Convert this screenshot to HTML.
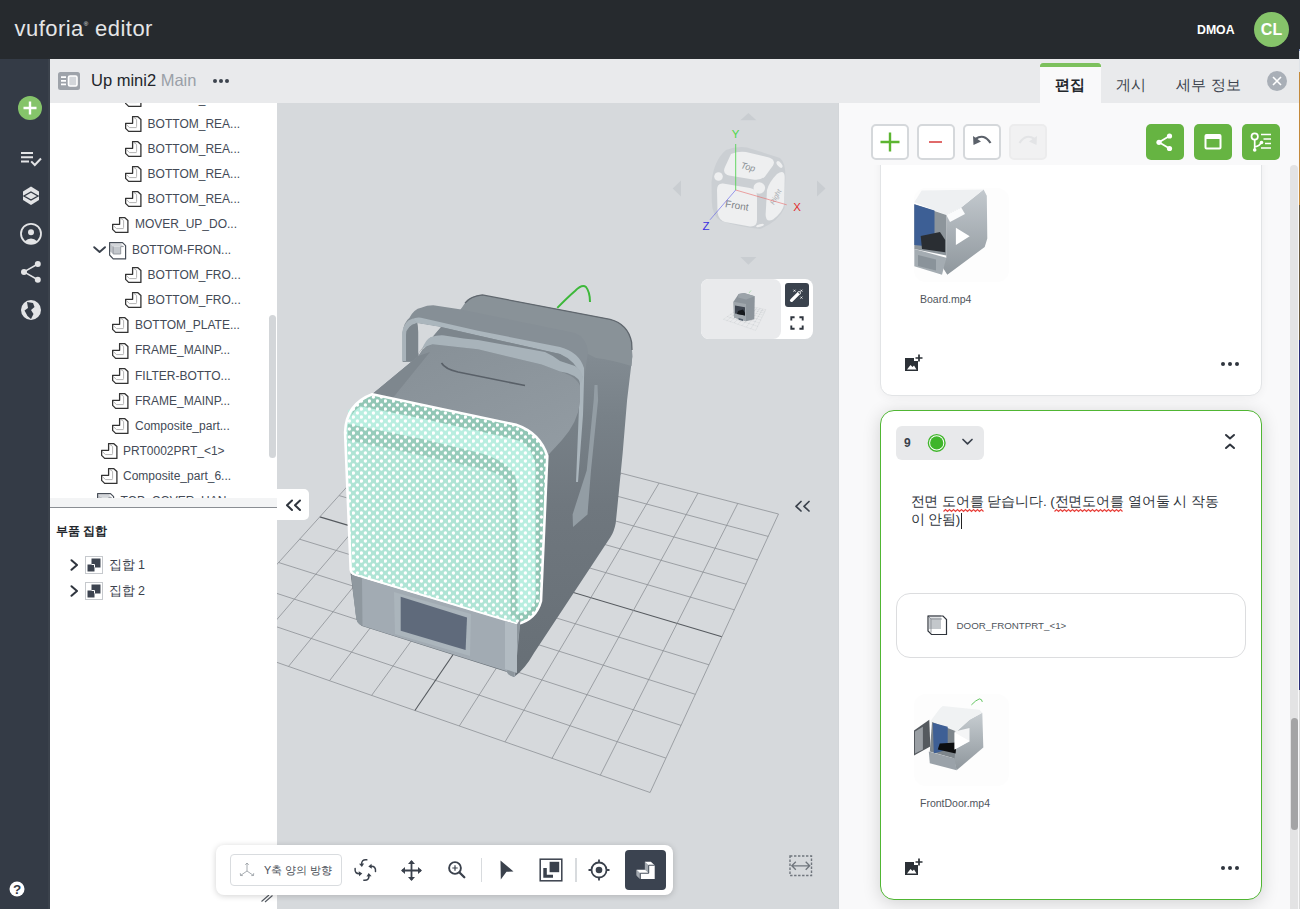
<!DOCTYPE html>
<html><head><meta charset="utf-8">
<style>
*{box-sizing:border-box;margin:0;padding:0}
html,body{width:1300px;height:909px;overflow:hidden;background:#d7dadd;font-family:"Liberation Sans",sans-serif}
.abs{position:absolute}
#topbar{left:0;top:0;width:1299px;height:59px;background:#262a2e}
#edge{left:1299px;top:0;width:1px;height:909px;background:linear-gradient(#262a2e 0 49px,#8090c0 49px 51px,#dfe3e8 51px 72px,#c48a3c 72px 205px,#6a5a40 205px 340px,#2c2f7a 340px 690px,#d9d9d9 690px)}
#side{left:0;top:59px;width:50px;height:850px;background:#343b46}
#hdr{left:50px;top:59px;width:1249px;height:44px;background:#e9eaec}
#tree{left:50px;top:103px;width:227px;height:806px;background:#fff;overflow:hidden}
#view{left:277px;top:103px;width:561px;height:806px;background:#d6d9dc;overflow:hidden}
#rp{left:838px;top:103px;width:461px;height:806px;background:#f9f9fa;overflow:hidden}
.row{position:absolute;height:20px;font-size:12px;color:#434a56;white-space:nowrap;line-height:20px}
.row svg{position:absolute;top:2px}
.row span{position:absolute;top:0}
</style></head><body>
<svg width="0" height="0" style="position:absolute">
<defs>
<symbol id="part" viewBox="0 0 17 17">
<path d="M8.9 1.5 L11.6 3.4 L11.6 10.8 M1.3 8.4 L4.4 11.6 L11.6 11.6" fill="none" stroke="#b5b5b5" stroke-width="1"/>
<path d="M7.6 0.6 L12.6 0.6 L15.9 3.6 L15.9 15.4 L3.65 15.4 L0.6 12.4 L0.6 7.35 L7.6 7.35 Z" fill="none" stroke="#333" stroke-width="1.3" stroke-linejoin="round"/>
</symbol>
<symbol id="asm" viewBox="0 0 18 19">
<path d="M1.2 2.5 L11.7 2.5 L14.7 5.6 L4.2 5.6 Z" fill="#d2d5d9"/>
<path d="M1.2 2.5 L4.2 5.6 L4.2 13 L1.2 10.5 Z" fill="#bfc3c8"/>
<rect x="4.2" y="5.6" width="7.5" height="7.4" fill="#c3c7cc"/>
<path d="M4.2 5.6 L4.2 13 L11.7 13 L11.7 5.6 M11.7 5.6 L14.7 5.6" fill="none" stroke="#8e949b" stroke-width="0.9"/>
<path d="M0.6 1.6 L13.5 1.6 L16.6 4.65 L16.6 17.9 L4.2 17.9 L0.6 14 Z" fill="none" stroke="#474e58" stroke-width="1.2" stroke-linejoin="round"/>
</symbol>
</defs></svg>

<div id="topbar" class="abs">
 <div class="abs" style="left:14.5px;top:9.6px;font-size:22px;color:#e4e5e6;letter-spacing:0.45px;line-height:28px">vuforia<span style="font-size:6px;vertical-align:10px">&reg;</span> editor</div>
 <div class="abs" style="left:1197px;top:23px;font-size:12.3px;font-weight:bold;color:#fff;line-height:14px">DMOA</div>
 <div class="abs" style="left:1254px;top:12px;width:35px;height:35px;border-radius:50%;background:#86c46a;color:#fff;font-weight:bold;font-size:16px;line-height:35px;text-align:center">CL</div>
</div>
<div id="edge" class="abs"></div>

<div id="side" class="abs">
 <div class="abs" style="left:47.5px;top:0;width:2.5px;height:850px;background:#3b424c"></div>
 <svg class="abs" style="left:0;top:0" width="50" height="850">
  <g transform="translate(0,-59)">
   <circle cx="30" cy="108" r="12" fill="#85c46a"/>
   <path d="M30 101.5 V114.5 M23.5 108 H36.5" stroke="#fff" stroke-width="2.4"/>
   <path d="M21 153 H33 M21 157.2 H33 M21 161.4 H29" stroke="#e3e4e6" stroke-width="2"/>
   <path d="M31.2 161.4 L34.8 165 L41 158.5" fill="none" stroke="#e3e4e6" stroke-width="2"/>
   <path d="M31 186.5 L39 191.5 L39 200 L31 205 L23 200 L23 191.5 Z" fill="#e3e4e6"/>
   <path d="M31 192 L38 196 L31 200 L24 196 Z" fill="#e3e4e6" stroke="#343b46" stroke-width="1.4"/>
   <circle cx="31" cy="233.8" r="10" fill="none" stroke="#e3e4e6" stroke-width="1.8"/>
   <circle cx="31" cy="232.3" r="3" fill="#e3e4e6"/>
   <path d="M24.5 241.5 Q31 235.5 37.5 241.5 Q31 246 24.5 241.5 Z" fill="#e3e4e6"/>
   <path d="M24 271.9 L37.8 264 M24 271.9 L37.8 279.8" stroke="#e3e4e6" stroke-width="1.6"/>
   <circle cx="24" cy="271.9" r="3" fill="#e3e4e6"/><circle cx="37.8" cy="264" r="3" fill="#e3e4e6"/><circle cx="37.8" cy="279.8" r="3" fill="#e3e4e6"/>
   <circle cx="31" cy="310" r="10" fill="#e3e4e6"/>
   <path d="M27 302 L33 303 L34.5 307 L31 310 L33.5 314 L31 319 L27.5 316 L24.5 310.5 L28 308 Z" fill="#343b46"/>
   <circle cx="17" cy="889" r="7.5" fill="#fff"/>
   <text x="17" y="894.2" font-size="13.5" font-weight="bold" fill="#343b46" text-anchor="middle" font-family="Liberation Sans">?</text>
  </g>
 </svg>
</div>

<div id="hdr" class="abs">
 <svg class="abs" style="left:8px;top:13px" width="22" height="18">
  <rect x="0" y="0" width="22" height="18" rx="2.5" fill="#9ea3aa"/>
  <path d="M3 5.2 H8 M3 8.8 H8 M3 12.4 H8" stroke="#fff" stroke-width="1.7"/>
  <rect x="10.5" y="4" width="8.5" height="10" rx="1.5" fill="#d3d6da" stroke="#fff" stroke-width="1.6"/>
 </svg>
 <div class="abs" style="left:41px;top:11px;font-size:16.5px;line-height:20px;color:#22262b;white-space:nowrap">Up mini2 <span style="color:#9aa0a8">Main</span></div>
 <svg class="abs" style="left:162px;top:18px" width="18" height="8"><circle cx="3" cy="4" r="2" fill="#3d444e"/><circle cx="9" cy="4" r="2" fill="#3d444e"/><circle cx="15" cy="4" r="2" fill="#3d444e"/></svg>
 <!-- tabs -->
 <div class="abs" style="left:990px;top:4px;width:61px;height:40px;background:#f9f9fa"></div>
 <div class="abs" style="left:990px;top:4px;width:61px;height:4px;background:#7cc05d;border-radius:3px 3px 0 0"></div>
 <div class="abs" style="left:1005px;top:17px;font-size:14.5px;font-weight:bold;color:#22262b;line-height:18px">편집</div>
 <div class="abs" style="left:1066px;top:17px;font-size:14.5px;color:#3d444e;line-height:18px">게시</div>
 <div class="abs" style="left:1126px;top:17px;font-size:14.5px;color:#3d444e;line-height:18px;letter-spacing:0.3px">세부 정보</div>
 <svg class="abs" style="left:1216px;top:12px" width="22" height="22"><circle cx="11" cy="10" r="10" fill="#a9afb7"/><path d="M7 6 L15 14 M15 6 L7 14" stroke="#fff" stroke-width="1.6"/></svg>
</div>
<div id="tree" class="abs">
<div class="abs" style="left:0;top:0;width:227px;height:395px;overflow:hidden">
<div class="row" style="left:0;top:-14.5px;width:227px"><svg style="left:74.7px;top:2.3px" width="17" height="17"><use href="#part"/></svg><span style="left:97.6px">BOTTOM_REA...</span></div>
<div class="row" style="left:0;top:10.7px;width:227px"><svg style="left:74.7px;top:2.3px" width="17" height="17"><use href="#part"/></svg><span style="left:97.6px">BOTTOM_REA...</span></div>
<div class="row" style="left:0;top:35.9px;width:227px"><svg style="left:74.7px;top:2.3px" width="17" height="17"><use href="#part"/></svg><span style="left:97.6px">BOTTOM_REA...</span></div>
<div class="row" style="left:0;top:61.1px;width:227px"><svg style="left:74.7px;top:2.3px" width="17" height="17"><use href="#part"/></svg><span style="left:97.6px">BOTTOM_REA...</span></div>
<div class="row" style="left:0;top:86.2px;width:227px"><svg style="left:74.7px;top:2.3px" width="17" height="17"><use href="#part"/></svg><span style="left:97.6px">BOTTOM_REA...</span></div>
<div class="row" style="left:0;top:111.4px;width:227px"><svg style="left:62.2px;top:2.3px" width="17" height="17"><use href="#part"/></svg><span style="left:85px">MOVER_UP_DO...</span></div>
<div class="row" style="left:0;top:136.6px;width:227px"><svg style="left:42.5px;top:6.2px" width="13" height="8"><path d="M1.2 1.2 L6.6 6 L12 1.2" fill="none" stroke="#3a414c" stroke-width="1.9" stroke-linecap="round" stroke-linejoin="round"/></svg><svg style="left:59px;top:1px" width="18" height="19"><use href="#asm"/></svg><span style="left:82px">BOTTOM-FRON...</span></div>
<div class="row" style="left:0;top:161.8px;width:227px"><svg style="left:74.7px;top:2.3px" width="17" height="17"><use href="#part"/></svg><span style="left:97.6px">BOTTOM_FRO...</span></div>
<div class="row" style="left:0;top:187.0px;width:227px"><svg style="left:74.7px;top:2.3px" width="17" height="17"><use href="#part"/></svg><span style="left:97.6px">BOTTOM_FRO...</span></div>
<div class="row" style="left:0;top:212.1px;width:227px"><svg style="left:62.2px;top:2.3px" width="17" height="17"><use href="#part"/></svg><span style="left:85px">BOTTOM_PLATE...</span></div>
<div class="row" style="left:0;top:237.3px;width:227px"><svg style="left:62.2px;top:2.3px" width="17" height="17"><use href="#part"/></svg><span style="left:85px">FRAME_MAINP...</span></div>
<div class="row" style="left:0;top:262.5px;width:227px"><svg style="left:62.2px;top:2.3px" width="17" height="17"><use href="#part"/></svg><span style="left:85px">FILTER-BOTTO...</span></div>
<div class="row" style="left:0;top:287.7px;width:227px"><svg style="left:62.2px;top:2.3px" width="17" height="17"><use href="#part"/></svg><span style="left:85px">FRAME_MAINP...</span></div>
<div class="row" style="left:0;top:312.9px;width:227px"><svg style="left:62.2px;top:2.3px" width="17" height="17"><use href="#part"/></svg><span style="left:85px">Composite_part...</span></div>
<div class="row" style="left:0;top:338.0px;width:227px"><svg style="left:50.7px;top:2.3px" width="17" height="17"><use href="#part"/></svg><span style="left:73px">PRT0002PRT_&lt;1&gt;</span></div>
<div class="row" style="left:0;top:363.2px;width:227px"><svg style="left:50.7px;top:2.3px" width="17" height="17"><use href="#part"/></svg><span style="left:73px">Composite_part_6...</span></div>
<div class="row" style="left:0;top:388.4px;width:227px"><svg style="left:31px;top:6.2px" width="13" height="8"><path d="M1.2 1.2 L6.6 6 L12 1.2" fill="none" stroke="#3a414c" stroke-width="1.9" stroke-linecap="round" stroke-linejoin="round"/></svg><svg style="left:46.7px;top:1px" width="18" height="19"><use href="#asm"/></svg><span style="left:70.6px">TOP_COVER_HAN...</span></div>
</div>
<div class="abs" style="left:0;top:395px;width:227px;height:9px;background:#f3f4f5"></div>
<div class="abs" style="left:0;top:404px;width:227px;height:1px;background:#8a8e93"></div>
<div class="abs" style="left:218.75px;top:212px;width:7px;height:143px;border-radius:3.5px;background:#d3d6d9"></div>
<div class="abs" style="left:6px;top:420px;font-size:11.8px;font-weight:bold;color:#22262b;line-height:16px">부품 집합</div>
<svg class="abs" style="left:20px;top:455.8px" width="10" height="12"><path d="M1.5 1.2 L7 6 L1.5 10.8" fill="none" stroke="#2f353e" stroke-width="2" stroke-linecap="round" stroke-linejoin="round"/></svg>
<svg class="abs" style="left:34.9px;top:452.8px" width="18" height="18"><rect x="0.5" y="0.5" width="17" height="17" fill="#fff" stroke="#c6c9cd"/><rect x="6.5" y="2.5" width="9" height="9" fill="#3d4450"/><rect x="2.5" y="8.5" width="7" height="7" fill="#3d4450"/><path d="M6.5 8.5 H9.5 V11.5" stroke="#fff" stroke-width="1" fill="none"/></svg>
<div class="abs" style="left:58.6px;top:453.8px;font-size:12.5px;color:#3a414c;line-height:16px">집합 1</div>
<svg class="abs" style="left:20px;top:481.8px" width="10" height="12"><path d="M1.5 1.2 L7 6 L1.5 10.8" fill="none" stroke="#2f353e" stroke-width="2" stroke-linecap="round" stroke-linejoin="round"/></svg>
<svg class="abs" style="left:34.9px;top:478.8px" width="18" height="18"><rect x="0.5" y="0.5" width="17" height="17" fill="#fff" stroke="#c6c9cd"/><rect x="6.5" y="2.5" width="9" height="9" fill="#3d4450"/><rect x="2.5" y="8.5" width="7" height="7" fill="#3d4450"/><path d="M6.5 8.5 H9.5 V11.5" stroke="#fff" stroke-width="1" fill="none"/></svg>
<div class="abs" style="left:58.6px;top:479.8px;font-size:12.5px;color:#3a414c;line-height:16px">집합 2</div>
</div>
<div id="view" class="abs">
<svg class="abs" style="left:0;top:0" width="561" height="806" viewBox="277 103 561 806">
<defs>
<pattern id="dots" x="0" y="-1" width="8" height="8" patternUnits="userSpaceOnUse">
<circle cx="1.4" cy="2" r="1.7" fill="#fff"/><circle cx="5.4" cy="6" r="1.7" fill="#fff"/>
</pattern>
<linearGradient id="rface" x1="0" y1="0" x2="0" y2="1">
<stop offset="0" stop-color="#879097"/><stop offset="0.16" stop-color="#828b92"/><stop offset="0.32" stop-color="#788188"/><stop offset="0.55" stop-color="#6f777e"/><stop offset="1" stop-color="#676f76"/>
</linearGradient>
<linearGradient id="tface" x1="0" y1="0" x2="1" y2="1">
<stop offset="0" stop-color="#858e95"/><stop offset="1" stop-color="#939ca3"/>
</linearGradient>
</defs>
<g id="grid">
<line x1="778.5" y1="514.0" x2="408.9" y2="418.2" stroke="#8d9196" stroke-width="0.8"/>
<line x1="768.2" y1="536.4" x2="392.5" y2="436.4" stroke="#8d9196" stroke-width="0.8"/>
<line x1="757.4" y1="559.8" x2="375.4" y2="455.4" stroke="#8d9196" stroke-width="0.8"/>
<line x1="746.1" y1="584.2" x2="357.6" y2="475.1" stroke="#8d9196" stroke-width="0.8"/>
<line x1="734.3" y1="609.8" x2="339.1" y2="495.6" stroke="#8d9196" stroke-width="0.8"/>
<line x1="721.9" y1="636.7" x2="319.8" y2="516.9" stroke="#55595e" stroke-width="1.1"/>
<line x1="709.0" y1="664.8" x2="299.6" y2="539.2" stroke="#8d9196" stroke-width="0.8"/>
<line x1="695.3" y1="694.3" x2="278.6" y2="562.5" stroke="#8d9196" stroke-width="0.8"/>
<line x1="681.0" y1="725.4" x2="256.6" y2="586.8" stroke="#8d9196" stroke-width="0.8"/>
<line x1="665.9" y1="758.1" x2="233.6" y2="612.3" stroke="#8d9196" stroke-width="0.8"/>
<line x1="650.1" y1="792.5" x2="209.6" y2="638.9" stroke="#8d9196" stroke-width="0.8"/>
<line x1="778.5" y1="514.0" x2="650.1" y2="792.5" stroke="#8d9196" stroke-width="0.8"/>
<line x1="737.8" y1="503.4" x2="600.3" y2="775.2" stroke="#8d9196" stroke-width="0.8"/>
<line x1="698.0" y1="493.1" x2="552.0" y2="758.3" stroke="#8d9196" stroke-width="0.8"/>
<line x1="659.1" y1="483.0" x2="505.0" y2="741.9" stroke="#8d9196" stroke-width="0.8"/>
<line x1="621.0" y1="473.2" x2="459.3" y2="726.0" stroke="#8d9196" stroke-width="0.8"/>
<line x1="583.7" y1="463.5" x2="414.9" y2="710.5" stroke="#55595e" stroke-width="1.1"/>
<line x1="547.3" y1="454.1" x2="371.6" y2="695.4" stroke="#8d9196" stroke-width="0.8"/>
<line x1="511.6" y1="444.8" x2="329.5" y2="680.7" stroke="#8d9196" stroke-width="0.8"/>
<line x1="476.7" y1="435.8" x2="288.5" y2="666.4" stroke="#8d9196" stroke-width="0.8"/>
<line x1="442.4" y1="426.9" x2="248.5" y2="652.5" stroke="#8d9196" stroke-width="0.8"/>
<line x1="408.9" y1="418.2" x2="209.6" y2="638.9" stroke="#8d9196" stroke-width="0.8"/>
</g>
<g id="model">
 <path d="M463.9,306.8 Q470,296 482.4,294.9 L610.1,319.3 Q628,324 631.6,342.2 L632.3,356.5 L627.1,400 L622.7,452.8 L617.5,505.6 L615.7,523.2 Q614,532 610.4,537.3 L534,653 Q525,669 514,677 L507,672 L362,626 Q356,623 356,616 L350.7,574.5 L346.4,431.5 Q347,408 372.2,394.3 L418.4,356 L441,327 L461,309 Z" fill="url(#rface)"/>
 <path d="M461,309 L467,300 Q472,295.5 482.4,294.9 L610.1,319.3 Q628,324 631.6,342.2 L632.3,356.5 L631.5,366 Q612,360 596,358 L584,352 L470,322 Z" fill="#899298"/>
 <path d="M465,303 Q471,296 482.4,294.9 L610.1,319.3 Q628,324 631.6,342.2 L632,350" fill="none" stroke="#60676e" stroke-width="1.3"/>
 <!-- strap top -->
 <path d="M402.6,362 L402.6,332.3 Q404,322 409.5,317.7 Q414,309 421.1,307.7 Q428,305 435,305.4 L459.6,309.2 L575,333 Q587,338 588,352 L584.4,377 L580,377 Q578,362 566,356 L478,335.4 L441,327 L417.2,323.1 L418.4,332 L418.4,362 Z" fill="#868f96"/>
 <!-- strap light edge -->
 <path d="M411.9,319.2 Q416,317 421,317.7 L478,330.8 L560,347 Q579,352 584,368 L584,380 L583,415 L578,482 L576,482 L578.7,415 L580,384 Q578,366 566,358 L560,354 L478,335.4 L441,327 L417.2,323.1 Z" fill="#abb6bd"/>
 <path d="M402.2,361 L402.2,333 Q403.5,321 413,318.5 L417.2,323.1 Q406.1,326 406.1,335 L406.1,361 Z" fill="#a9b3ba"/>
 <path d="M406.1,361 L406.1,335 Q406.1,326 417.2,323.1 L418.4,332 L418.4,361 Z" fill="#7c858c"/>
 <!-- loop bg -->
 <path d="M418.4,323.4 L441,327.3 L418.4,353.8 Z" fill="#d6d9dc"/>
 <!-- body back strip -->
 <path d="M441,327 L478,335.4 L560,354 Q575,360 583,378 L575,370 L560,362 L478,340 L463.4,338.5 L444.2,335.4 Q433,336 431.1,337 L422.6,347.7 L416.5,355.4 Z" fill="#7d868d"/>
 <!-- body top face -->
 <path d="M345.1,432.4 Q347,408 372.2,394.3 L418.4,356 L422.6,349.3 L432.6,344.3 L478,349.3 L541.6,364.6 L560,371.6 Q577,377 580,386 L580,402 Q578,422 562,440 L547.3,456 Q540,436 516,424.8 Z" fill="url(#tface)"/>
 <path d="M372.2,394.3 L418.4,356 L430,352 L392,399 Z" fill="#7c858c" opacity="0.85"/>
 <!-- lip -->
 <path d="M422.6,348.5 Q425,340 431.1,337 Q437,335 444.2,335.4 L463.4,338.5 L478,340 L545,352 Q552,355 560,361 L575,366 Q582,370 583,378 L581,383 Q576,374 560,371.6 L541.6,364.6 L478,349.3 L432.6,344.3 Q426,346 422.6,349.3 Z" fill="#a8b3ba"/>
 <path d="M441.5,363 Q445,369 458,372 L525,385.5" fill="none" stroke="#596068" stroke-width="1.6"/>
 <!-- right leg wide strip -->
 <path d="M594.5,385 L597.5,385 L598.1,400 L591,470.4 L587.5,514.4 L573,527 L572.6,514.4 L586.7,470.4 L593.7,400 Z" fill="#939da4"/>
 <!-- door base -->
 <path d="M372.2,394.3 L516,424.8 Q540,433 547.3,456 L541,601 Q536,620 517,624 L362,577 Q351,575 350.7,570 L345.1,432.4 Q347,408 372.2,394.3 Z" fill="#afe4d5"/>
 <path d="M348,410 L360.4,406.2 L421.9,418.5 L498.8,435.4 L522,441.5 Q532,448 535.6,465 L535.8,598 Q534,612 517.4,616 L517.3,490 Q517,480 514,474 Q507,462 483.5,454 L421.9,439 L348,424 Z" fill="#b9eee0"/>
 <path d="M350,418 Q356,401 372.2,394.3 L516,424.8 Q540,433 547.3,456 L541,601 Q536,620 517,624 L516,614 Q534,612 535.8,598 L535.6,465 Q532,448 522,441.5 L498.8,435.4 L421.9,418.5 L360.4,406.2 Q354,410 350,418 Z" fill="#91c6b5"/>
 <path d="M348,424 L421.9,439 L483.5,454 Q507,462 514,474 Q517,480 517.3,490 L517.5,618 L510.4,616 L510.4,492 Q509,485 503.5,478.5 Q497,472 483.5,469.2 L421.9,455.4 L348,440 Z" fill="#97ccbb"/>
 <path d="M372.2,394.3 L516,424.8 Q540,433 547.3,456 L541,601 Q536,620 517,624 L362,577 Q351,575 350.7,570 L345.1,432.4 Q346,404 372.2,394.3 Z" fill="url(#dots)" stroke="#fff" stroke-width="2.6"/>
 <!-- bottom strip -->
 <path d="M351.5,575 L362,578 L517,624.5 L520.5,619 L515,677 Q510,676 506,671 L363,626 Q356,623 356,616 Z" fill="#a2abb3"/>
 <path d="M351.5,575 L362,578 L362.5,626 Q356,623 356,616 Z" fill="#8f989f"/>
 <path d="M517,624.5 L520.5,619 L514,677 Q508,676 507,672 Z" fill="#8d969d"/>
 <path d="M505,621 L517,624.5 L517,673 L505,669 Z" fill="#b2bbc2"/>
 <path d="M394,592 L471,614 L470,656 L395,634 Z" fill="#abb5bc"/>
 <path d="M400.7,596.8 L467,617.5 L465.6,649.9 L400.7,630.7 Z" fill="#5f6a7b"/>
 <path d="M557.3,307.9 Q568,297 575,291 Q582,284 586,287 Q590,292 590,302" fill="none" stroke="#3db83a" stroke-width="2"/>
</g>
<!-- view cube -->
<g id="cube">
 <path d="M740.4,120.3 L748.4,113 L756.4,120.3 Z" fill="#c9cdd1"/>
 <path d="M740.4,257 L748.4,264.7 L756.4,257 Z" fill="#c9cdd1"/>
 <path d="M681,180.5 L672.7,188.5 L681,196.5 Z" fill="#c9cdd1"/>
 <path d="M817,180.5 L825.5,188.5 L817,196.5 Z" fill="#c9cdd1"/>
 <path d="M726,150 Q736,146 747,147.4 L780,158 Q786,163 785.3,179 L784.5,208 Q778,222 760,229 Q740,227 721,221 Q712,216 711.8,202 L711.5,182 Q714,160 726,150 Z" fill="#cbcfd3"/>
 <path d="M731,154 Q738,151 746,152 L769,157.5 Q776,160 773,165.5 L765,176.5 Q761,180.5 753,179.5 L729,175.5 Q722,173.5 725,167 Z" fill="#eeeff0"/>
 <path d="M723,183.5 Q717,183 717,190 L717.5,212 Q718.5,220 725,222 L750,226.5 Q757,227 757,220 L757,196 Q757,189 750,188 Z" fill="#eeeff0"/>
 <path d="M767,190 Q769,182 777,174 Q784.5,169 784.7,177 L784.2,204 Q783,212 773,219.5 Q766,223 765.6,215 Z" fill="#eeeff0"/>
 <circle cx="718.5" cy="176.5" r="4.3" fill="#eeeff0"/>
 <circle cx="759.3" cy="188" r="5.8" fill="#eeeff0"/>
 <ellipse cx="779.5" cy="164.5" rx="2" ry="4" transform="rotate(-40 779.5 164.5)" fill="#eeeff0"/>
 <ellipse cx="760" cy="225.5" rx="4" ry="1.3" transform="rotate(-15 760 225.5)" fill="#eeeff0"/>
 <text x="748" y="170" font-size="9" font-style="italic" fill="#8c9196" text-anchor="middle" transform="rotate(15 748 167)" font-family="Liberation Sans">Top</text>
 <text x="737" y="209" font-size="10" fill="#7e8388" text-anchor="middle" transform="rotate(9 737 205)" font-family="Liberation Sans">Front</text>
 <text x="776" y="199" font-size="7" font-style="italic" fill="#a9adb1" text-anchor="middle" transform="rotate(-62 776 197)" font-family="Liberation Sans">Right</text>
 <line x1="735.7" y1="190" x2="735.7" y2="144" stroke="#55d455" stroke-width="0.9"/>
 <line x1="735.7" y1="190" x2="786.7" y2="204.8" stroke="#e86a6a" stroke-width="0.6"/>
 <line x1="735.7" y1="190" x2="710" y2="219.8" stroke="#5a5ae6" stroke-width="0.6"/>
 <text x="735.7" y="137.5" font-size="11.5" fill="#4ed84a" text-anchor="middle" font-family="Liberation Sans">Y</text>
 <text x="797" y="211" font-size="11.5" fill="#e22e2e" text-anchor="middle" font-family="Liberation Sans">X</text>
 <text x="706" y="229.5" font-size="11.5" fill="#3a2ee0" text-anchor="middle" font-family="Liberation Sans">Z</text>
</g>
</svg>
</div>
<!-- minimap -->
<div class="abs" style="left:701px;top:279px;width:112px;height:60px;border-radius:8px;background:#fff;overflow:hidden">
 <div class="abs" style="left:0;top:0;width:80px;height:60px;background:#e9eaec;border-radius:0 8px 8px 0"></div>
 <svg class="abs" style="left:0;top:0" width="112" height="60" viewBox="701 279 112 60">
  <path d="M744.0,305.0 L723.4,319.3 M744.0,305.0 L765.9,309.6 M746.4,305.5 L726.8,320.5 M742.3,306.2 L765.1,311.2 M749.0,306.0 L730.3,321.7 M740.4,307.5 L764.2,313.0 M751.6,306.6 L734.0,322.9 M738.3,309.0 L763.2,315.0 M754.2,307.2 L737.9,324.3 M736.0,310.6 L762.1,317.3 M757.0,307.7 L742.0,325.7 M733.4,312.4 L760.8,319.9 M759.9,308.3 L746.3,327.2 M730.5,314.4 L759.4,322.9 M762.8,309.0 L750.9,328.7 M727.2,316.7 L757.7,326.3 M765.9,309.6 L755.7,330.4 M723.4,319.3 L755.7,330.4" fill="none" stroke="#fdfdfd" stroke-width="0.9"/>
  <path d="M744.0,305.0 L723.4,319.3 M744.0,305.0 L765.9,309.6 M746.4,305.5 L726.8,320.5 M742.3,306.2 L765.1,311.2 M749.0,306.0 L730.3,321.7 M740.4,307.5 L764.2,313.0 M751.6,306.6 L734.0,322.9 M738.3,309.0 L763.2,315.0 M754.2,307.2 L737.9,324.3 M736.0,310.6 L762.1,317.3 M757.0,307.7 L742.0,325.7 M733.4,312.4 L760.8,319.9 M759.9,308.3 L746.3,327.2 M730.5,314.4 L759.4,322.9 M762.8,309.0 L750.9,328.7 M727.2,316.7 L757.7,326.3 M765.9,309.6 L755.7,330.4 M723.4,319.3 L755.7,330.4" fill="none" stroke="#a9aeb3" stroke-width="0.35"/>
  <path d="M733.5,301.8 L738.6,294 L744,293 L754.8,296.2 L754.3,319.3 L746,321.2 L734,317.5 Z" fill="#8c949b"/>
  <path d="M733.5,301.8 L746,304 L746,321.2 L734,317.5 Z" fill="#a0a7ad"/>
  <path d="M735,305.5 L745,307.3 L745,315.6 L735,313.5 Z" fill="#3e4550"/>
  <path d="M738,311 L743,309.5 L745,313 L745,315.6 L737,314 Z" fill="#15181c"/>
  <path d="M738.5,318 L743,319.2 L743,321 L738.5,319.8 Z" fill="#55606e"/>
  <path d="M738.6,294 L744,293 L754.8,296.2 L746,299.5 L738,297.5 Z" fill="#9ba3a9"/>
  <path d="M749,293 L751,290.5" stroke="#7fd07f" stroke-width="0.5"/>
 </svg>
 <div class="abs" style="left:84px;top:4px;width:24px;height:24px;border-radius:3px;background:#3a424d"></div>
 <svg class="abs" style="left:84px;top:4px" width="24" height="24">
  <path d="M6.6 17.3 L12.6 11.3" stroke="#fff" stroke-width="3.3" stroke-linecap="round"/>
  <circle cx="14" cy="10" r="1.5" fill="none" stroke="#fff" stroke-width="0.8"/>
  <path d="M8.5 6.7 L10.5 8.7 M10.5 6.7 L8.5 8.7 M15.4 6.7 L17.4 8.7 M17.4 6.7 L15.4 8.7 M15.4 13.6 L17.4 15.6 M17.4 13.6 L15.4 15.6" stroke="#fff" stroke-width="0.8"/>
 </svg>
 <svg class="abs" style="left:89px;top:37px" width="16" height="16">
  <path d="M1.3 4.6 V1.3 H4.6 M9.4 1.3 H12.7 V4.6 M12.7 9.4 V12.7 H9.4 M4.6 12.7 H1.3 V9.4" fill="none" stroke="#2f353e" stroke-width="1.9"/>
 </svg>
</div>
<!-- collapse buttons -->
<div class="abs" style="left:277px;top:489px;width:32px;height:31px;background:#fff;border-radius:0 5px 5px 0"></div>
<svg class="abs" style="left:285px;top:499px" width="17" height="13"><path d="M7 1.5 L2 6.3 L7 11 M15 1.5 L10 6.3 L15 11" fill="none" stroke="#2f353e" stroke-width="2" stroke-linecap="round" stroke-linejoin="round"/></svg>
<svg class="abs" style="left:794px;top:500px" width="17" height="13"><path d="M7 1.5 L2 6.3 L7 11 M15 1.5 L10 6.3 L15 11" fill="none" stroke="#3a414b" stroke-width="1.7" stroke-linecap="round" stroke-linejoin="round"/></svg>
<!-- fit icon -->
<svg class="abs" style="left:789px;top:855px" width="24" height="22">
 <rect x="1" y="1" width="21.5" height="19.5" fill="none" stroke="#6f757c" stroke-width="1.4" stroke-dasharray="2.4 1.6"/>
 <path d="M3 10.8 H20.5 M6.8 6.8 L2.8 10.8 L6.8 14.8 M16.7 6.8 L20.7 10.8 L16.7 14.8" fill="none" stroke="#6f757c" stroke-width="1.3"/>
</svg>
<!-- resize handle -->
<svg class="abs" style="left:260px;top:893px" width="14" height="10"><path d="M1.5 8.5 L9 2 M5 9 L12.5 2.5" stroke="#555b62" stroke-width="1.1"/></svg>
<!-- bottom toolbar -->
<div class="abs" style="left:216px;top:845px;width:457px;height:50px;background:#fff;border-radius:8px;box-shadow:0 1px 6px rgba(0,0,0,0.18)"></div>
<div class="abs" style="left:229.5px;top:854px;width:112px;height:31.5px;border:1px solid #d9dcdf;border-radius:4px;background:#fff"></div>
<svg class="abs" style="left:238px;top:861px" width="18" height="18">
 <path d="M9 2 V10 M9 10 L2.5 14.5 M9 10 L15.5 14.5 M7.3 3.8 L9 2 L10.7 3.8 M2.3 12.2 L2.5 14.5 L4.8 14.6 M13.3 14.6 L15.5 14.5 L15.7 12.2" fill="none" stroke="#9ca1a7" stroke-width="0.9"/>
</svg>
<div class="abs" style="left:264px;top:862px;font-size:10.8px;color:#4a5058;line-height:16px;white-space:nowrap">Y축 양의 방향</div>
<svg class="abs" style="left:352px;top:857px" width="27" height="27"><g transform="translate(13.3,13)"><g transform="rotate(0)"><path d="M1.5 -10.2 Q-4.2 -10.8 -3.6 -5.2" fill="none" stroke="#3a414c" stroke-width="1.5" stroke-linecap="round"/><path d="M-6.3 -6.2 L-3.4 -3 L-1.2 -6.6 Z" fill="#3a414c"/></g><g transform="rotate(90)"><path d="M1.5 -10.2 Q-4.2 -10.8 -3.6 -5.2" fill="none" stroke="#3a414c" stroke-width="1.5" stroke-linecap="round"/><path d="M-6.3 -6.2 L-3.4 -3 L-1.2 -6.6 Z" fill="#3a414c"/></g><g transform="rotate(180)"><path d="M1.5 -10.2 Q-4.2 -10.8 -3.6 -5.2" fill="none" stroke="#3a414c" stroke-width="1.5" stroke-linecap="round"/><path d="M-6.3 -6.2 L-3.4 -3 L-1.2 -6.6 Z" fill="#3a414c"/></g><g transform="rotate(270)"><path d="M1.5 -10.2 Q-4.2 -10.8 -3.6 -5.2" fill="none" stroke="#3a414c" stroke-width="1.5" stroke-linecap="round"/><path d="M-6.3 -6.2 L-3.4 -3 L-1.2 -6.6 Z" fill="#3a414c"/></g></g></svg>
<svg class="abs" style="left:400px;top:859px" width="23" height="23">
 <path d="M11.5 2 V21 M2 11.5 H21" stroke="#3a414c" stroke-width="1.8"/>
 <path d="M8 5 L11.5 1 L15 5 Z M8 18 L11.5 22 L15 18 Z M5 8 L1 11.5 L5 15 Z M18 8 L22 11.5 L18 15 Z" fill="#3a414c"/>
</svg>
<svg class="abs" style="left:446px;top:859px" width="22" height="22">
 <circle cx="9" cy="9" r="5.9" fill="none" stroke="#3a414c" stroke-width="1.9"/>
 <path d="M13.5 13.5 L18.3 18.3" stroke="#3a414c" stroke-width="2.3" stroke-linecap="round"/>
 <path d="M9 6.3 V11.7 M6.3 9 H11.7" stroke="#3a414c" stroke-width="1.2"/>
</svg>
<div class="abs" style="left:480.5px;top:858px;width:1.5px;height:24px;background:#d8dbde"></div>
<svg class="abs" style="left:498px;top:859px" width="18" height="22"><path d="M2.5 1.5 L15.5 12.5 L8.5 12.8 L2.8 20.5 Z" fill="#3a414c"/></svg>
<svg class="abs" style="left:539px;top:858px" width="24" height="24">
 <rect x="1.2" y="1.2" width="21.6" height="21.6" fill="none" stroke="#3a414c" stroke-width="1.5"/>
 <rect x="10.6" y="3.8" width="9.6" height="10.4" fill="#3a414c"/>
 <path d="M4.3 10 H7.8 V16.8 H14 V19.7 H4.3 Z" fill="#3a414c"/>
</svg>
<div class="abs" style="left:575px;top:858px;width:1.5px;height:24px;background:#d8dbde"></div>
<svg class="abs" style="left:587px;top:858px" width="24" height="24">
 <circle cx="12" cy="12" r="7.5" fill="none" stroke="#3a414c" stroke-width="1.8"/>
 <circle cx="12" cy="12" r="3.3" fill="#3a414c"/>
 <path d="M12 1.5 V4.5 M12 19.5 V22.5 M1.5 12 H4.5 M19.5 12 H22.5" stroke="#3a414c" stroke-width="1.8"/>
</svg>
<div class="abs" style="left:625px;top:850px;width:40.5px;height:40px;background:#3b4350;border-radius:4px"></div>
<svg class="abs" style="left:635.5px;top:860.5px" width="20" height="20" viewBox="0 0 17 17">
 <path d="M7.6 0.6 L12.6 0.6 L15.9 3.6 L15.9 15.4 L3.65 15.4 L0.6 12.4 L0.6 7.35 L7.6 7.35 Z" fill="#fff"/>
 <path d="M7.6 0.6 L10.8 3.6 L10.8 10.4 L7.6 7.35 Z M0.6 7.35 L3.65 10.4 L3.65 15.4 L0.6 12.4 Z" fill="#a3a9b0"/>
 <path d="M10.8 3.6 L15.9 3.6 M3.65 10.4 L10.8 10.4 M10.8 3.6 V10.4 M3.65 10.4 V15.4" fill="none" stroke="#3b4350" stroke-width="0.8"/></svg>
<div id="rp" class="abs">
 <div class="abs" style="left:0;top:0;width:1px;height:806px;background:#d3d6d9"></div>
</div>
<!-- toolbar buttons -->
<div class="abs" style="left:871px;top:124px;width:38px;height:36px;border:2px solid #d5d8db;border-radius:5px;background:#fff"></div>
<svg class="abs" style="left:871px;top:124px" width="38" height="36"><path d="M19 8.5 V27.5 M9.5 18 H28.5" stroke="#5cb531" stroke-width="2.4"/></svg>
<div class="abs" style="left:917px;top:124px;width:38px;height:36px;border:2px solid #d5d8db;border-radius:5px;background:#fff"></div>
<svg class="abs" style="left:917px;top:124px" width="38" height="36"><path d="M12 18 H25" stroke="#e06a6a" stroke-width="2"/></svg>
<div class="abs" style="left:963px;top:124px;width:38px;height:36px;border:2px solid #d5d8db;border-radius:5px;background:#fff"></div>
<svg class="abs" style="left:963px;top:124px" width="38" height="36"><path d="M12.5 15 Q21 9 27.5 19" fill="none" stroke="#5b616a" stroke-width="2.2"/><path d="M10 12 L10.5 21 L18 17.5 Z" fill="#5b616a"/></svg>
<div class="abs" style="left:1009px;top:124px;width:38px;height:36px;border:2px solid #ececed;border-radius:5px;background:#f1f1f2"></div>
<svg class="abs" style="left:1009px;top:124px" width="38" height="36"><path d="M25.5 15 Q17 9 10.5 19" fill="none" stroke="#e3e4e6" stroke-width="2.2"/><path d="M28 12 L27.5 21 L20 17.5 Z" fill="#e3e4e6"/></svg>

<div class="abs" style="left:1146px;top:124px;width:38px;height:36px;border-radius:5px;background:#66b442"></div>
<svg class="abs" style="left:1146px;top:124px" width="38" height="36">
 <path d="M13 18.3 L23.5 12 M13 18.3 L23.5 24.5" stroke="#fff" stroke-width="1.8"/>
 <circle cx="13" cy="18.3" r="2.6" fill="#fff"/><circle cx="23.5" cy="12" r="2.6" fill="#fff"/><circle cx="23.5" cy="24.5" r="2.6" fill="#fff"/>
</svg>
<div class="abs" style="left:1194px;top:124px;width:38px;height:36px;border-radius:5px;background:#66b442"></div>
<svg class="abs" style="left:1194px;top:124px" width="38" height="36"><rect x="11.5" y="11" width="15" height="13.5" rx="1" fill="none" stroke="#fff" stroke-width="2"/><path d="M11.5 13.5 H26.5" stroke="#fff" stroke-width="3"/></svg>
<div class="abs" style="left:1242px;top:124px;width:38px;height:36px;border-radius:5px;background:#66b442"></div>
<svg class="abs" style="left:1242px;top:124px" width="38" height="36">
 <circle cx="12.7" cy="12.5" r="3.2" fill="none" stroke="#fff" stroke-width="1.7"/>
 <path d="M12.7 15.7 V26 M12.7 23 Q18 22 19 18.5" fill="none" stroke="#fff" stroke-width="1.7"/>
 <circle cx="19.5" cy="18.5" r="1.8" fill="#fff"/><circle cx="12.7" cy="26" r="1.8" fill="#fff"/>
 <path d="M19 10.5 H29 M21.5 15 H29 M23 19.5 H29 M19 24 H29" stroke="#fff" stroke-width="1.7"/>
</svg>

<!-- scroll area -->
<div class="abs" style="left:839px;top:165px;width:460px;height:744px;overflow:hidden">
 <div class="abs" style="left:451px;top:0;width:8px;height:744px;background:#e3e3e4;border-radius:4px 4px 0 0"></div>
 <div class="abs" style="left:451.5px;top:553px;width:7px;height:112px;background:#a4a4a5;border-radius:3.5px"></div>
 <!-- card 1 -->
 <div class="abs" style="left:41px;top:-40px;width:381.5px;height:271px;background:#fff;border:1px solid #e2e4e6;border-radius:12px;box-shadow:0 2px 8px rgba(0,0,0,0.045)"></div>
 <!-- card 2 -->
 <div class="abs" style="left:41px;top:245px;width:381.5px;height:489.5px;background:#fff;border:1.6px solid #50b633;border-radius:14px;box-shadow:0 3px 18px rgba(0,0,0,0.16)"></div>
</div>
<!-- card1 content -->
<div class="abs" style="left:914px;top:188px;width:95px;height:94px;border-radius:12px;background:#fdfdfd"></div>
<svg class="abs" style="left:900px;top:170px" width="110" height="140" viewBox="900 170 110 140">
 <defs><linearGradient id="th1" x1="0" y1="0" x2="0" y2="1"><stop offset="0" stop-color="#c3c9ce"/><stop offset="1" stop-color="#8f979d"/></linearGradient></defs>
 <path d="M946.3,215 L961.2,207.5 L983.6,189.4 L986.8,195.8 L987.3,238.5 L984.7,247 L947.3,274.7 L942,266.2 L946.3,257.7 Z" fill="url(#th1)"/>
 <path d="M914.3,202.2 L921.7,190.5 L983.6,189.4 L961.2,207.5 L946.3,215 Z" fill="#eef0f2"/>
 <path d="M946.3,215 L961.2,207.5 L965,214 L950,222 Z" fill="#fafbfc"/>
 <path d="M914.3,204.3 L946.3,215 L946.3,255.5 L914.3,249.1 Z" fill="#8d959b"/>
 <path d="M914.3,204.3 L934.5,210.5 L934.5,247 L914.3,245 Z" fill="#3d5f95"/>
 <path d="M920.7,236 L940,232 L945.2,240 L945.2,252.3 L922,249 Z" fill="#2a2e33"/>
 <path d="M914.3,249.1 L946.3,257.7 L942,274.7 L914.3,266.2 Z" fill="#a4acb2"/>
 <path d="M918,255 L936,259.5 L936,270.5 L918,266 Z" fill="#8a939a"/>
 <path d="M955.9,227.8 L969.7,236.3 L955.9,244.9 Z" fill="#fff"/>
</svg>
<div class="abs" style="left:920px;top:293px;font-size:10.5px;color:#4f555c;line-height:12px">Board.mp4</div>
<svg class="abs" style="left:903px;top:353px" width="20" height="20">
 <path d="M2 5 H12 V8 H15 V18 H2 Z" fill="#2b3036"/>
 <path d="M4 16.5 L7.5 12 L9.5 14 L11 12.5 L13.5 16.5 Z" fill="#fff"/>
 <path d="M12 8 V5" stroke="#fff" stroke-width="2"/>
 <path d="M16 1.5 V8.5 M12.5 5 H19.5" stroke="#2b3036" stroke-width="1.7"/>
</svg>
<svg class="abs" style="left:1220px;top:360px" width="20" height="8"><circle cx="3" cy="4" r="2" fill="#2f353e"/><circle cx="10" cy="4" r="2" fill="#2f353e"/><circle cx="17" cy="4" r="2" fill="#2f353e"/></svg>

<!-- card2 content -->
<div class="abs" style="left:896px;top:426px;width:88px;height:34px;border-radius:6px;background:#e8e9eb"></div>
<div class="abs" style="left:904px;top:435px;font-size:12px;font-weight:bold;color:#3a414c;line-height:16px">9</div>
<svg class="abs" style="left:926px;top:432px" width="22" height="22"><circle cx="10.7" cy="10.9" r="8.3" fill="#fff" stroke="#3fb52a" stroke-width="1.4"/><circle cx="10.7" cy="10.9" r="6.6" fill="#3fb52a"/></svg>
<svg class="abs" style="left:961px;top:437px" width="13" height="10"><path d="M2 2.5 L6.5 6.8 L11 2.5" fill="none" stroke="#3a414c" stroke-width="1.7" stroke-linecap="round" stroke-linejoin="round"/></svg>
<svg class="abs" style="left:1223px;top:432px" width="14" height="20"><path d="M3 3 L7 6.5 L11 3 M3 16 L7 12.5 L11 16" fill="none" stroke="#2f353e" stroke-width="2" stroke-linecap="round" stroke-linejoin="round"/></svg>
<div class="abs" style="left:910.5px;top:493px;width:320px;font-size:13.5px;letter-spacing:-0.1px;color:#30353c;line-height:18px">전면 도어를 닫습니다. (전면도어를 열어둘 시 작동<br>이 안됨)</div>
<div class="abs" style="left:961px;top:513px;width:1px;height:16px;background:#222"></div>
<svg class="abs" style="left:0;top:0;overflow:visible" width="1" height="1"><path d="M943.5 511.5 l2 -2 l2 2 l2 -2 l2 2 l2 -2 l2 2 l2 -2 l2 2 l2 -2 l2 2 l2 -2 l2 2 l2 -2 l2 2 l2 -2 l2 2 l2 -2 l2 2 l2 -2 l2 2 M1054.5 511.5 l2 -2 l2 2 l2 -2 l2 2 l2 -2 l2 2 l2 -2 l2 2 l2 -2 l2 2 l2 -2 l2 2 l2 -2 l2 2 l2 -2 l2 2 l2 -2 l2 2 l2 -2 l2 2 l2 -2 l2 2 l2 -2 l2 2 l2 -2 l2 2 l2 -2 l2 2 l2 -2 l2 2 l2 -2 l2 2 l2 -2 l2 2" fill="none" stroke="#e8413c" stroke-width="1.15"/></svg>
<div class="abs" style="left:896px;top:592.5px;width:349.5px;height:65px;border:1px solid #dcdddf;border-radius:14px;background:#fff"></div>
<svg class="abs" style="left:927px;top:615px" width="21" height="21">
 <rect x="2" y="2.5" width="12" height="11.5" fill="#c3c7cb"/>
 <path d="M1 1 L4 4 L15 4 M4 4 V17.5 M1 1 L14 1" fill="none" stroke="#8c9197" stroke-width="0.9"/>
 <path d="M1 1 L16 1 L19.5 4.5 L19.5 19.5 L4.5 19.5 L1 16 Z" fill="none" stroke="#30353c" stroke-width="1.2"/>
</svg>
<div class="abs" style="left:956.5px;top:620px;font-size:9.75px;color:#4f555c;line-height:12px;white-space:nowrap">DOOR_FRONTPRT_&lt;1&gt;</div>

<div class="abs" style="left:914px;top:694px;width:95px;height:92px;border-radius:12px;background:#fdfdfd"></div>
<svg class="abs" style="left:900px;top:680px" width="110" height="140" viewBox="900 680 110 140">
 <defs><linearGradient id="th2" x1="0" y1="0" x2="0" y2="1"><stop offset="0" stop-color="#c7cdd1"/><stop offset="1" stop-color="#8e969c"/></linearGradient></defs>
 <path d="M914,730.6 L929.3,719.7 L930.3,746.5 L914,755.4 Z" fill="#555a5f"/>
 <path d="M915,731.6 L922.9,726.7 L922.9,749.5 L915,753.4 Z" fill="#9a9fa4"/>
 <path d="M956.6,731.6 L969.5,719.7 L982.3,712.8 L983.3,747.5 L956.6,770.3 L953.6,758.4 Z" fill="url(#th2)"/>
 <path d="M930.8,720.7 L939.7,708.8 L942.7,705.9 L979.4,709.8 L982.3,712.8 L969.5,719.7 L956.6,731.6 L930.8,723 Z" fill="#f0f2f3"/>
 <path d="M932,722 L956.6,731.6 L954.6,758.4 L929.8,751.4 Z" fill="#7d858b"/>
 <path d="M932.8,722.7 L947.7,726.7 L947.7,749.5 L933.8,753.4 Z" fill="#3e5f95"/>
 <path d="M939.7,743.5 L956.6,742.5 L955.6,753.4 L937.8,749.5 Z" fill="#0c0d0f"/>
 <path d="M928.8,751.4 L954.6,758.4 L956.6,770.3 L929.8,763.3 Z" fill="#9aa2a9"/>
 <path d="M954.6,731.6 L969.5,728 L969.5,741.5 L954.6,749.5 Z" fill="#f4f5f6"/>
 <path d="M954.6,732.6 L969.5,741 L954.6,749.5 Z" fill="#fff"/>
 <path d="M971.4,704.9 Q976,700 979.4,698.9 Q982,699 982.3,701.9" fill="none" stroke="#3db83a" stroke-width="0.8"/>
</svg>
<div class="abs" style="left:920px;top:797px;font-size:10.5px;color:#4f555c;line-height:12px">FrontDoor.mp4</div>
<svg class="abs" style="left:903px;top:857px" width="20" height="20">
 <path d="M2 5 H12 V8 H15 V18 H2 Z" fill="#2b3036"/>
 <path d="M4 16.5 L7.5 12 L9.5 14 L11 12.5 L13.5 16.5 Z" fill="#fff"/>
 <path d="M12 8 V5" stroke="#fff" stroke-width="2"/>
 <path d="M16 1.5 V8.5 M12.5 5 H19.5" stroke="#2b3036" stroke-width="1.7"/>
</svg>
<svg class="abs" style="left:1220px;top:864px" width="20" height="8"><circle cx="3" cy="4" r="2" fill="#2f353e"/><circle cx="10" cy="4" r="2" fill="#2f353e"/><circle cx="17" cy="4" r="2" fill="#2f353e"/></svg>
</body></html>
